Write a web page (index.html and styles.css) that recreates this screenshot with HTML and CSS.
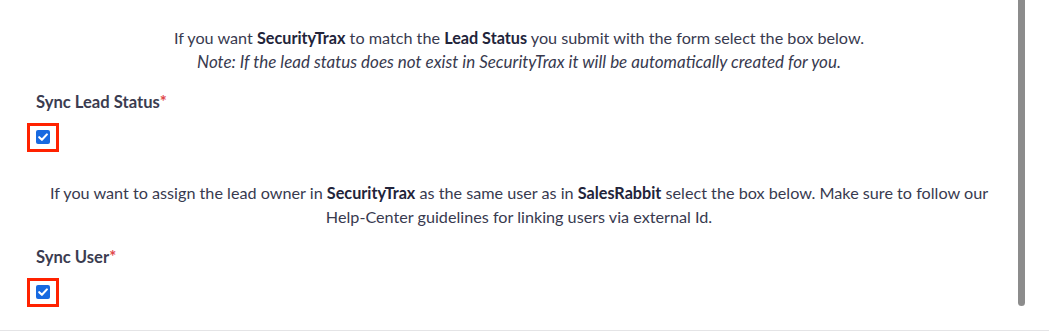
FILE: index.html
```html
<!DOCTYPE html>
<html lang="en">
<head>
<meta charset="utf-8">
<title>SecurityTrax sync settings</title>
<link rel="stylesheet" href="styles.css">
</head>
<body>
<div class="page">
  <div class="content">
    <p class="help">If you want <b>SecurityTrax</b> to match the <b>Lead Status</b> you submit with the form select the box below.<br><i>Note: If the lead status does not exist in SecurityTrax it will be automatically created for you.</i></p>
    <div class="field">
      <div class="label">Sync Lead Status<span class="req">*</span></div>
      <span class="highlight">
        <svg class="check" width="14" height="14" viewBox="0 0 14 14"><rect width="14" height="14" rx="2" fill="#1769e0"/><path d="M3.2 7.2 L5.9 9.8 L10.9 4.4" fill="none" stroke="#fff" stroke-width="2.1" stroke-linecap="round" stroke-linejoin="round"/></svg>
      </span>
    </div>
    <p class="help">If you want to assign the lead owner in <b>SecurityTrax</b> as the same user as in <b>SalesRabbit</b> select the box below. Make sure to follow our <span class="nowrap">Help-Center</span> guidelines for linking users via external Id.</p>
    <div class="field">
      <div class="label">Sync User<span class="req">*</span></div>
      <span class="highlight">
        <svg class="check" width="14" height="14" viewBox="0 0 14 14"><rect width="14" height="14" rx="2" fill="#1769e0"/><path d="M3.2 7.2 L5.9 9.8 L10.9 4.4" fill="none" stroke="#fff" stroke-width="2.1" stroke-linecap="round" stroke-linejoin="round"/></svg>
      </span>
    </div>
  </div>
  <div class="scrollbar"></div>
</div>
</body>
</html>
```
FILE: styles.css
```css
html, body {
  margin: 0;
  padding: 0;
  background: #ffffff;
}
body {
  font-family: Lato, "Open Sans", Arial, sans-serif;
  color: #383a4f;
}
.page {
  position: relative;
  box-sizing: border-box;
  height: 331px;
  border-bottom: 1px solid #e4e4e6;
  overflow: hidden;
}
.content {
  width: 966px;
  padding: 26px 0 0 36px;
}
.help {
  margin: 0;
  text-align: center;
  font-size: 16.2px;
  line-height: 24px;
}
.help b {
  font-weight: 700;
  color: #22243a;
}
.help i {
  font-style: italic;
  font-size: 17px;
}
.nowrap {
  white-space: nowrap;
}
.field {
  margin: 17px 0 29px;
}
.label {
  font-size: 16.6px;
  line-height: 22px;
  font-weight: 700;
  color: #3b3c50;
}
.req {
  color: #e0474a;
}
.highlight {
  display: inline-flex;
  margin: 10px 0 0 -9px;
  padding: 4px 6px 5px 6px;
  border: 3px solid #ff2200;
}
.check {
  display: block;
}
.scrollbar {
  position: absolute;
  top: 0;
  right: 24px;
  width: 7px;
  height: 306px;
  background: #8c8c8c;
  border-radius: 0 0 4px 4px;
}
```
